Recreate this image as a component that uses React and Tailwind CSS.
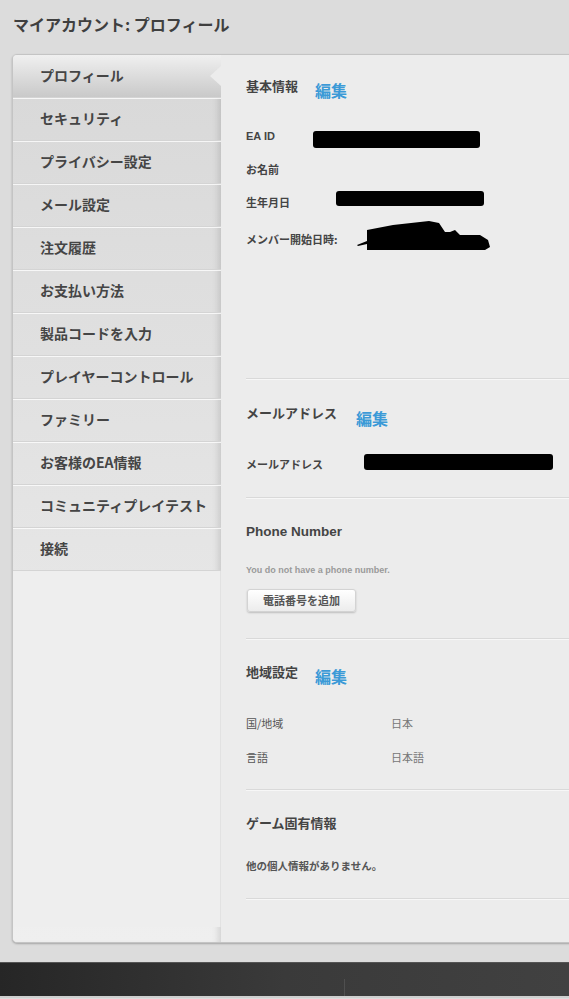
import React from 'react';

const jp = "font-['Noto_Sans_CJK_JP','Noto_Sans',sans-serif]";
const en = "font-['Liberation_Sans','Noto_Sans_CJK_JP',sans-serif]";

const menu = [
  'プロフィール',
  'セキュリティ',
  'プライバシー設定',
  'メール設定',
  '注文履歴',
  'お支払い方法',
  '製品コードを入力',
  'プレイヤーコントロール',
  'ファミリー',
  'お客様のEA情報',
  'コミュニティプレイテスト',
  '接続',
];

const Divider = () => (
  <div className="h-px bg-[#d9d9d9] shadow-[0_1px_0_#f7f7f7]" />
);

const Heading = ({ children, edit, gap = 'ml-[17px]', drop = 'translate-y-[4px]' }) => (
  <div className="flex items-center h-[20px]">
    <span className={`${jp} text-[13px] font-bold text-[#444] leading-[20px]`}>{children}</span>
    {edit && (
      <span className={`${jp} ${gap} ${drop} text-[16px] font-bold text-[#3b9ad7] leading-[20px]`}>編集</span>
    )}
  </div>
);

const Bar = ({ className }) => (
  <div className={`bg-black rounded-[3px] blur-[0.6px] ${className}`} />
);

export default function App() {
  return (
    <div className="min-h-[999px] bg-[#dcdcdc] overflow-hidden flex flex-col">
      <div className="h-[54px] pt-[14px] pl-[13px]">
        <h1 className={`${jp} text-[16px] font-bold text-[#3f3f3f] leading-[20px]`}>
          マイアカウント: プロフィール
        </h1>
      </div>

      <div className="ml-[12px] -mr-[10px] h-[889px] flex bg-[#eeeeee] rounded-[5px] border border-[#c4c4c4] shadow-[0_1px_2px_rgba(0,0,0,0.25)] overflow-hidden">
        {/* sidebar */}
        <div className="w-[208px] shrink-0 flex flex-col bg-gradient-to-b from-[#d8d8d8] via-[#e4e4e4] to-[#efefef] shadow-[inset_-7px_0_7px_-5px_rgba(0,0,0,0.14)]">
          <ul className="flex flex-col">
            {menu.map((item, i) => (
              <li
                key={item}
                className={`relative h-[43px] flex items-center pl-[27px] border-b border-[#d4d4d4] shadow-[inset_0_1px_0_rgba(255,255,255,0.75)] ${
                  i === 0 ? 'bg-gradient-to-b from-[#f0f0f0] to-[#c9c9c9] shadow-none' : ''
                }`}
              >
                <span className={`${jp} text-[14px] font-bold text-[#454545] leading-[20px] -translate-y-px`}>{item}</span>
                {i === 0 && (
                  <span className="absolute right-0 top-[11px] w-0 h-0 border-y-[10px] border-y-transparent border-r-[11px] border-r-[#ececec]" />
                )}
              </li>
            ))}
          </ul>
          <div className="flex-1 bg-[#eeeeee] mb-[15px] border-r border-[#e2e2e2]" />
        </div>

        {/* content */}
        <div className="flex-1 bg-[#ececec] pl-[25px]">
          <section className="pt-[21px]">
            <Heading edit>基本情報</Heading>
            <div className="mt-[24px]">
              <div className="h-[33px] flex items-center">
                <span className={`${en} w-[67px] text-[11px] font-bold text-[#444]`}>EA ID</span>
                <Bar className="w-[167px] h-[17px] translate-y-[3px]" />
              </div>
              <div className="h-[33px] flex items-center">
                <span className={`${jp} text-[11px] font-bold text-[#444]`}>お名前</span>
              </div>
              <div className="h-[33px] flex items-center">
                <span className={`${jp} w-[90px] text-[11px] font-bold text-[#444]`}>生年月日</span>
                <Bar className="w-[148px] h-[15px] -translate-y-[4px]" />
              </div>
              <div className="h-[40px] flex items-center">
                <span className={`${jp} w-[107px] text-[11px] font-bold text-[#444]`}>メンバー開始日時:</span>
                <svg width="140" height="34" viewBox="0 0 140 34" className="blur-[0.5px] -translate-y-[3px]">
                  <path
                    d="M14 22 L4 26 L5 27 L14 25 L14 31 L132 31 L137 28 L135 21 L127 16 L107 16 L102 11 L97 13 L92 13 L86 4 L76 2 L40 6 L14 11 Z"
                    fill="#000"
                  />
                </svg>
              </div>
            </div>
          </section>

          <div className="mt-[119px]">
            <Divider />
          </div>

          <section className="pt-[24px]">
            <Heading edit gap="ml-[19px]" drop="translate-y-[5px]">メールアドレス</Heading>
            <div className="mt-[31px] h-[20px] flex items-center">
              <span className={`${jp} w-[118px] text-[11px] font-bold text-[#444]`}>メールアドレス</span>
              <Bar className="w-[189px] h-[16px] -translate-y-[2px]" />
            </div>
          </section>

          <div className="mt-[23px]">
            <Divider />
          </div>

          <section className="pt-[24px]">
            <div className={`${en} h-[20px] leading-[20px] text-[13.5px] font-bold text-[#444]`}>Phone Number</div>
            <div className={`${en} mt-[20px] h-[16px] leading-[16px] text-[9px] font-bold text-[#9a9a9a]`}>
              You do not have a phone number.
            </div>
            <button
              className={`${jp} mt-[11px] ml-px w-[109px] h-[23px] rounded-[3px] bg-gradient-to-b from-[#ffffff] to-[#ececec] border border-[#d3d3d3] shadow-[0_1px_2px_rgba(0,0,0,0.2)] text-[11px] font-bold text-[#555] leading-none`}
            >
              電話番号を追加
            </button>
          </section>

          <div className="mt-[26px]">
            <Divider />
          </div>

          <section className="pt-[23px]">
            <Heading edit>地域設定</Heading>
            <div className="mt-[31px] h-[20px] flex items-center">
              <span className={`${jp} w-[145px] text-[11px] text-[#555]`}>国/地域</span>
              <span className={`${jp} text-[11px] text-[#777]`}>日本</span>
            </div>
            <div className="mt-[14px] h-[20px] flex items-center">
              <span className={`${jp} w-[145px] text-[11px] text-[#555]`}>言語</span>
              <span className={`${jp} text-[11px] text-[#777]`}>日本語</span>
            </div>
          </section>

          <div className="mt-[22px]">
            <Divider />
          </div>

          <section className="pt-[23px]">
            <Heading>ゲーム固有情報</Heading>
            <div className={`${jp} mt-[23px] h-[20px] leading-[20px] text-[10.5px] font-bold text-[#555]`}>
              他の個人情報がありません。
            </div>
          </section>

          <div className="mt-[22px]">
            <Divider />
          </div>
        </div>
      </div>

      <div className="mt-[19px] h-[36px] relative bg-gradient-to-r from-[#262626] via-[#3a3a3a] to-[#414141] border-t border-[#555] border-b-2 border-b-[#cfcfcf]">
        <span className="absolute left-[344px] top-[16px] bottom-0 w-px bg-[#4f4f4f]" />
      </div>
    </div>
  );
}
